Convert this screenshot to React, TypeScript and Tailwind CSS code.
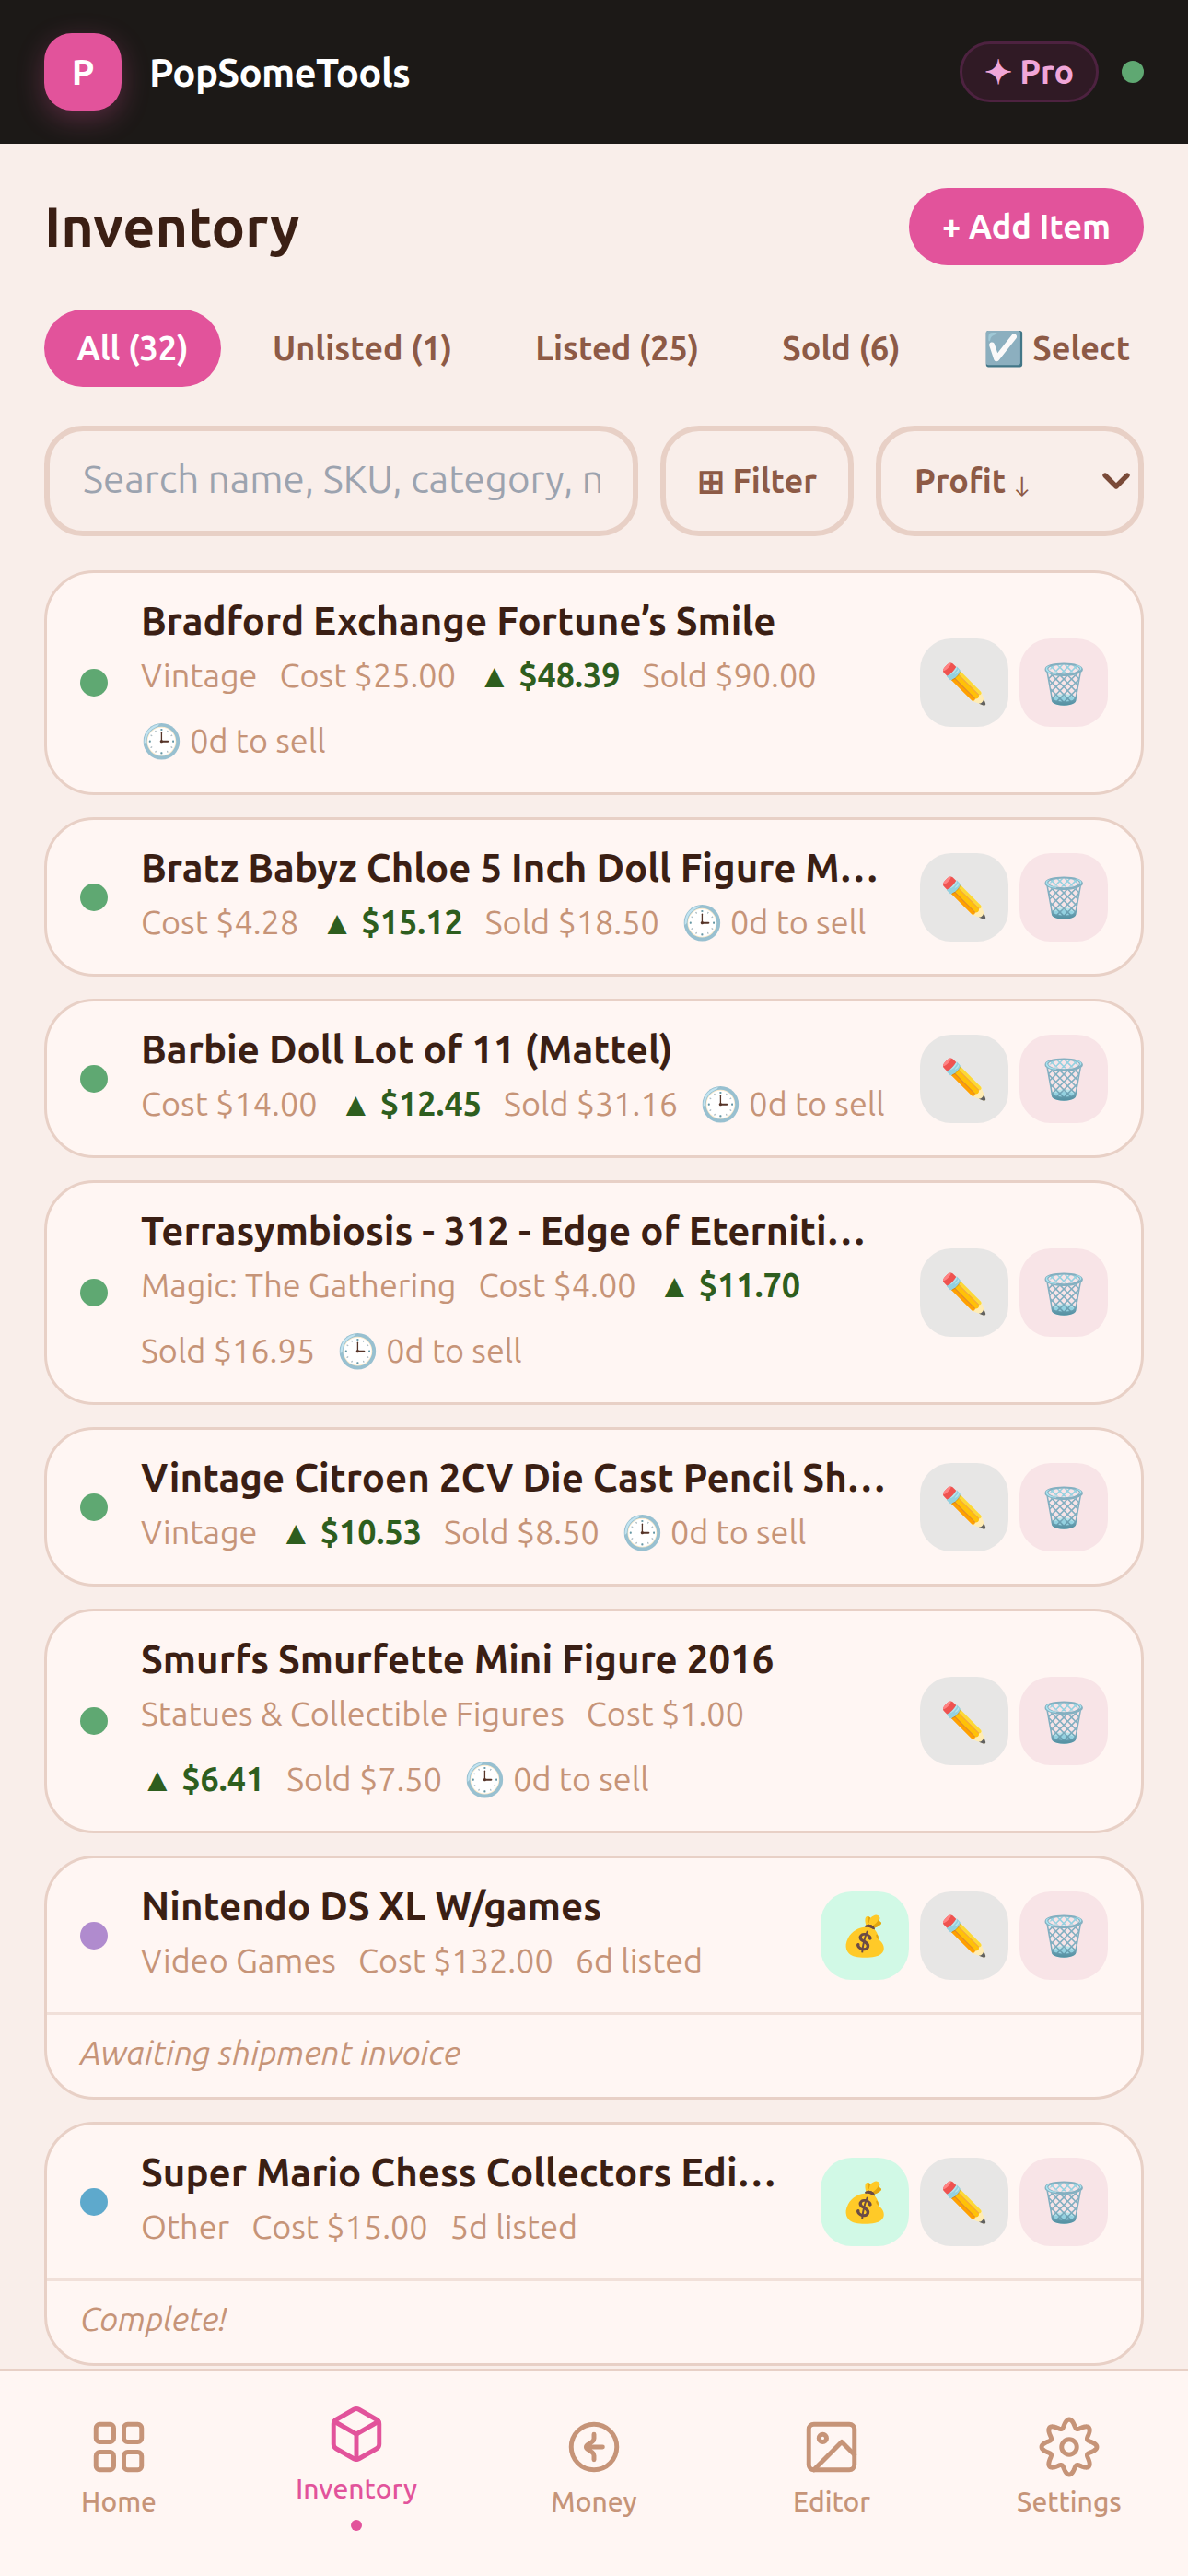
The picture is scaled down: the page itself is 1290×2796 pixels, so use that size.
import React from "react";
import { Box } from "lucide-react";

const Dot = ({ c }: { c: string }) => <span className={`w-[30px] h-[30px] rounded-full shrink-0 ${c}`} />;

const Btn = ({ e, c }: { e: string; c: string }) => (
  <span className={`w-[96px] h-[96px] rounded-[34px] flex items-center justify-center text-[42px] shrink-0 ${c}`}>{e}</span>
);

const Profit = ({ v }: { v: string }) => (
  <span className="font-bold text-[#2e5e1e] text-[36px]">▲ {v}</span>
);

type CardProps = {
  title: string;
  dot: string;
  meta: React.ReactNode[];
  firstRow?: React.ReactNode[];
  sell?: boolean;
  note?: string;
};

const Card = ({ title, dot, meta, firstRow, sell, note }: CardProps) => (
  <div className="rounded-[54px] border-[3px] border-[#e8d0c6] bg-[#fff6f3] overflow-hidden shrink-0">
    <div className="flex items-center px-[36px] py-[28px]">
      <Dot c={dot} />
      <div className="flex-1 min-w-0 ml-[36px] mr-[36px] pb-[4px]">
        <div className="text-[42px] leading-[48px] font-bold text-[#3b1f14] truncate">{title}</div>
        <div className="mt-[11px] flex flex-wrap gap-x-[24px] gap-y-[23px] text-[36px] leading-[48px] text-[#c69478] font-normal">
          {firstRow && (
            <div className="w-full flex gap-x-[24px]">
              {firstRow.map((m, i) => (
                <span key={i}>{m}</span>
              ))}
            </div>
          )}
          {meta.map((m, i) => (
            <span key={i}>{m}</span>
          ))}
        </div>
      </div>
      <div className="flex gap-[12px] shrink-0">
        {sell && <Btn e="💰" c="bg-[#d1f9e6]" />}
        <Btn e="✏️" c="bg-[#e7e6e5]" />
        <Btn e="🗑️" c="bg-[#f8e4e7]" />
      </div>
    </div>
    {note && (
      <div className="border-t-[3px] border-[#f1e0d9] px-[36px] h-[92px] pb-[8px] flex items-center italic text-[36px] text-[#c69478]">
        {note}
      </div>
    )}
  </div>
);

const Sell = () => <>🕒 0d to sell</>;

const NavItem = ({ icon, label, active }: { icon: React.ReactNode; label: string; active?: boolean }) => (
  <div className={`flex-1 flex flex-col items-center ${active ? "text-[#e2539b]" : "text-[#c69478]"}`}>
    <div className="w-[66px] h-[66px]">{icon}</div>
    <div className="text-[30px] leading-[36px] font-medium mt-[8px]">{label}</div>
    {active && <div className="w-[12px] h-[12px] rounded-full bg-[#e2539b] mt-[16px]" />}
  </div>
);

const gearPath = (() => {
  const pts: string[] = [];
  for (let i = 0; i <= 240; i++) {
    const t = (i / 240) * Math.PI * 2;
    const r = 9.3 + 1.6 * Math.cos(8 * t);
    const x = 12 + r * Math.sin(t);
    const y = 12 - r * Math.cos(t);
    pts.push(`${i === 0 ? "M" : "L"}${x.toFixed(2)} ${y.toFixed(2)}`);
  }
  return pts.join(" ") + "Z";
})();

const NavSvg = ({ children }: { children: React.ReactNode }) => (
  <svg width="66" height="66" viewBox="0 0 24 24" fill="none" stroke="currentColor" strokeWidth="1.8" strokeLinecap="round" strokeLinejoin="round">
    {children}
  </svg>
);

export default function App() {
  return (
    <div className="w-[1290px] h-[2796px] flex flex-col overflow-hidden bg-[#f9eeea] font-['Ubuntu','Lato','Noto_Sans',sans-serif]">
      <header className="h-[156px] shrink-0 bg-[#1c1917] flex items-center px-[48px]">
        <div className="w-[84px] h-[84px] rounded-[30px] bg-[#e2539b] shadow-[0_9px_30px_rgba(226,83,155,0.3)] flex items-center justify-center text-white text-[39px] font-bold">
          P
        </div>
        <div className="ml-[30px] text-white text-[42px] font-bold tracking-[-0.7px]">PopSomeTools</div>
        <div className="ml-auto h-[66px] w-[151px] rounded-full border-[3px] border-[#4d2240] bg-[#301a25] text-[#f0a6d8] text-[36px] font-bold flex items-center justify-center">
          ✦ Pro
        </div>
        <div className="ml-[25px] w-[24px] h-[24px] rounded-full bg-[#5fa872]" />
      </header>

      <main className="flex-1 min-h-0 px-[48px] overflow-hidden">
        <div className="flex items-center justify-between mt-[48px] h-[84px]">
          <h1 className="text-[61px] font-bold text-[#3b1f14]">Inventory</h1>
          <button className="h-[84px] w-[255px] rounded-[42px] bg-[#e2539b] text-white text-[36px] font-bold">+ Add Item</button>
        </div>

        <div className="mt-[48px] flex items-center text-[36px] font-bold text-[#8d5a46]">
          <span className="h-[84px] w-[192px] rounded-[42px] bg-[#e2539b] text-white flex items-center justify-center">All (32)</span>
          <span className="ml-[56px]">Unlisted (1)</span>
          <span className="ml-[90px]">Listed (25)</span>
          <span className="ml-[90px]">Sold (6)</span>
          <span className="ml-[90px]">☑️ Select</span>
        </div>

        <div className="mt-[42px] flex gap-[24px] h-[120px]">
          <input
            className="w-[645px] rounded-[42px] border-[6px] border-[#e8d0c6] bg-transparent px-[36px] pb-[6px] text-[42px] text-[#3b1f14] placeholder:text-[#9ca3af] outline-none"
            placeholder="Search name, SKU, category, notes..."
          />
          <div className="w-[210px] rounded-[42px] border-[6px] border-[#e8d0c6] flex items-center justify-center text-[36px] font-bold text-[#8d5a46]">
            ⊞ Filter
          </div>
          <div className="w-[291px] rounded-[42px] border-[6px] border-[#e8d0c6] flex items-center justify-between pl-[36px] pr-[6px] text-[36px] font-bold text-[#8d5a46]">
            <span>
              Profit <span className="text-[24px] font-normal">↓</span>
            </span>
            <svg width="36" height="36" viewBox="0 0 24 24" fill="none" stroke="#7a4a38" strokeWidth="3.6" strokeLinecap="round" strokeLinejoin="round">
              <path d="M4 8l8 8 8-8" />
            </svg>
          </div>
        </div>

        <div className="mt-[37px] flex flex-col gap-[24px]">
          <Card title="Bradford Exchange Fortune’s Smile" dot="bg-[#5fa872]" meta={["Vintage", "Cost $25.00", <Profit v="$48.39" />, "Sold $90.00", <Sell />]} />
          <Card title="Bratz Babyz Chloe 5 Inch Doll Figure Mini Collection" dot="bg-[#5fa872]" meta={["Cost $4.28", <Profit v="$15.12" />, "Sold $18.50", <Sell />]} />
          <Card title="Barbie Doll Lot of 11 (Mattel)" dot="bg-[#5fa872]" meta={["Cost $14.00", <Profit v="$12.45" />, "Sold $31.16", <Sell />]} />
          <Card title="Terrasymbiosis - 312 - Edge of Eternities Rare Card" dot="bg-[#5fa872]" meta={["Magic: The Gathering", "Cost $4.00", <Profit v="$11.70" />, "Sold $16.95", <Sell />]} />
          <Card title="Vintage Citroen 2CV Die Cast Pencil Sharpener Model" dot="bg-[#5fa872]" meta={["Vintage", <Profit v="$10.53" />, "Sold $8.50", <Sell />]} />
          <Card title="Smurfs Smurfette Mini Figure 2016" dot="bg-[#5fa872]" firstRow={["Statues & Collectible Figures", "Cost $1.00"]} meta={[<Profit v="$6.41" />, "Sold $7.50", <Sell />]} />
          <Card title="Nintendo DS XL W/games" dot="bg-[#b08bce]" sell meta={["Video Games", "Cost $132.00", "6d listed"]} note="Awaiting shipment invoice" />
          <Card title="Super Mario Chess Collectors Edition Board Game" dot="bg-[#5ea9cc]" sell meta={["Other", "Cost $15.00", "5d listed"]} note="Complete!" />
        </div>
      </main>

      <nav className="h-[225px] shrink-0 border-t-[3px] border-[#e8d0c6] bg-[#fff6f3] flex items-center pb-[14px]">
        <NavItem
          label="Home"
          icon={
            <NavSvg>
              <rect x="3" y="3" width="7" height="7" rx="1.5" />
              <rect x="14" y="3" width="7" height="7" rx="1.5" />
              <rect x="3" y="14" width="7" height="7" rx="1.5" />
              <rect x="14" y="14" width="7" height="7" rx="1.5" />
            </NavSvg>
          }
        />
        <NavItem label="Inventory" active icon={<Box size={66} strokeWidth={1.8} />} />
        <NavItem
          label="Money"
          icon={
            <NavSvg>
              <circle cx="12" cy="12" r="9" />
              <path d="M12 7v1.6c0 .6-.3 1-.7 1.3l-2.1 1.4a.9.9 0 0 0 0 1.4l2.1 1.4c.4.3.7.7.7 1.3V17M9 12h6.4" />
            </NavSvg>
          }
        />
        <NavItem
          label="Editor"
          icon={
            <NavSvg>
              <rect x="3" y="3" width="18" height="18" rx="2" />
              <circle cx="8.5" cy="8.5" r="1.5" />
              <polyline points="21 15 16 10 5 21" />
            </NavSvg>
          }
        />
        <NavItem
          label="Settings"
          icon={
            <NavSvg>
              <path d={gearPath} />
              <circle cx="12" cy="12" r="3" />
            </NavSvg>
          }
        />
      </nav>
    </div>
  );
}
